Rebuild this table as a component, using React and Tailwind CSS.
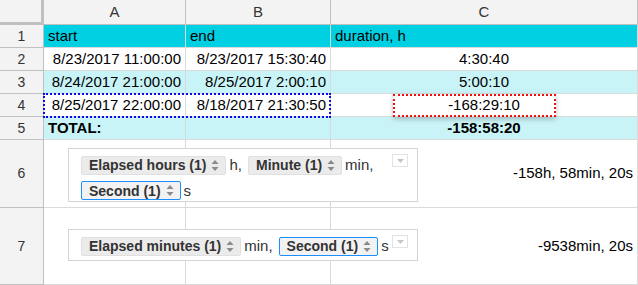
import React from 'react';

const Updown = () => (
  <svg width="8" height="13" viewBox="0 0 8 13" className="shrink-0">
    <path d="M4 1 L7.5 5 L0.5 5 Z" fill="#8a8a8a" />
    <path d="M4 12 L7.5 8 L0.5 8 Z" fill="#8a8a8a" />
  </svg>
);

const Chip = ({ label, active }) => (
  <span
    className={
      'flex items-center h-[19px] gap-[5px] pl-[7px] pr-[6px] rounded-[2px] text-[14px] font-bold text-[#333] leading-none border ' +
      (active ? 'border-[#1a8fff] bg-[#f2f2f2]' : 'border-[#e0e0e0] bg-[#ebebeb]')
    }
  >
    {label}
    <Updown />
  </span>
);

const Drop = () => (
  <div className="absolute right-[9px] top-[5px] w-[16px] h-[13px] border border-[#e3e3e3] bg-white flex items-center justify-center">
    <svg width="7" height="4" viewBox="0 0 7 4">
      <path d="M0 0 L7 0 L3.5 4 Z" fill="#c6c6c6" />
    </svg>
  </div>
);

const widths = ['w-[142px]', 'w-[145px]', 'w-[307px]'];

const Row = ({ num, h, bg, cells }) => (
  <div className={'flex ' + h}>
    <div className="w-[44px] shrink-0 bg-[#f3f3f3] border-r border-b border-[#c0c0c0] flex items-center justify-center text-[14px] text-[#333]">
      {num}
    </div>
    {cells.map((c, i) => (
      <div
        key={i}
        className={
          widths[i] +
          ' shrink-0 border-r border-b border-[#dadada] flex items-center px-[4px] text-[15px] text-black whitespace-nowrap ' +
          bg +
          ' ' +
          (c.cls || '')
        }
      >
        {c.t}
      </div>
    ))}
  </div>
);

export default function App() {
  const lite = 'bg-[#c9f4f7]';
  return (
    <div className="relative w-[638px] h-[285px] overflow-hidden bg-white font-['Liberation_Sans',Arial,sans-serif]">
      {/* column header */}
      <div className="flex h-[25px]">
        <div className="w-[44px] shrink-0 bg-[#f3f3f3] border-r-[3px] border-b-[3px] border-[#c0c0c0]" />
        {['A', 'B', 'C'].map((l, i) => (
          <div
            key={l}
            className={widths[i] + ' shrink-0 bg-[#f3f3f3] border-r border-b border-[#c0c0c0] flex items-center justify-center text-[15px] text-[#333]'}
          >
            {l}
          </div>
        ))}
      </div>

      <Row
        num="1"
        h="h-[23px]"
        bg="bg-[#00d0e1] border-[#2fbfcc]"
        cells={[{ t: 'start' }, { t: 'end' }, { t: 'duration, h' }]}
      />
      <Row
        num="2"
        h="h-[23px]"
        bg="bg-white"
        cells={[
          { t: '8/23/2017 11:00:00', cls: 'justify-end' },
          { t: '8/23/2017 15:30:40', cls: 'justify-end' },
          { t: '4:30:40', cls: 'justify-center' },
        ]}
      />
      <Row
        num="3"
        h="h-[23px]"
        bg={lite}
        cells={[
          { t: '8/24/2017 21:00:00', cls: 'justify-end' },
          { t: '8/25/2017 2:00:10', cls: 'justify-end' },
          { t: '5:00:10', cls: 'justify-center' },
        ]}
      />
      <Row
        num="4"
        h="h-[23px]"
        bg="bg-white"
        cells={[
          { t: '8/25/2017 22:00:00', cls: 'justify-end' },
          { t: '8/18/2017 21:30:50', cls: 'justify-end' },
          { t: '-168:29:10', cls: 'justify-center' },
        ]}
      />
      <Row
        num="5"
        h="h-[23px]"
        bg={lite}
        cells={[
          { t: 'TOTAL:', cls: 'font-bold' },
          { t: '' },
          { t: '-158:58:20', cls: 'justify-center font-bold' },
        ]}
      />
      <Row
        num="6"
        h="h-[68px]"
        bg="bg-white"
        cells={[{ t: '' }, { t: '' }, { t: '-158h, 58min, 20s', cls: 'justify-end' }]}
      />
      <Row
        num="7"
        h="h-[77px]"
        bg="bg-white"
        cells={[{ t: '' }, { t: '' }, { t: '-9538min, 20s', cls: 'justify-end' }]}
      />

      {/* selection overlays */}
      <div className="absolute left-[43px] top-[93px] w-[288px] h-[25px] border-2 border-dotted border-[#0a0ae6]" />
      <div className="absolute left-[393px] top-[94px] w-[163px] h-[23px] border-2 border-dotted border-[#f01010] shadow-[0_2px_5px_rgba(0,0,0,0.25)]" />

      {/* format editor widgets */}
      <div className="absolute left-[68px] top-[148px] w-[350px] h-[54px] bg-white border border-[#d4d4d4]">
        <div className="flex flex-wrap items-center w-[306px] ml-[12px] mt-[5px] gap-y-[3px] text-[15px] text-[#333]">
          <Chip label="Elapsed hours (1)" />
          <span className="ml-[3px] mr-[6px]">h,</span>
          <Chip label="Minute (1)" />
          <span className="ml-[3px] mr-[6px]">min,</span>
          <Chip label="Second (1)" active />
          <span className="ml-[3px]">s</span>
        </div>
        <Drop />
      </div>

      <div className="absolute left-[68px] top-[229px] w-[350px] h-[32px] bg-white border border-[#d4d4d4]">
        <div className="flex items-center ml-[12px] mt-[5px] text-[15px] text-[#333]">
          <Chip label="Elapsed minutes (1)" />
          <span className="ml-[3px] mr-[6px]">min,</span>
          <Chip label="Second (1)" active />
          <span className="ml-[3px]">s</span>
        </div>
        <Drop />
      </div>
    </div>
  );
}
